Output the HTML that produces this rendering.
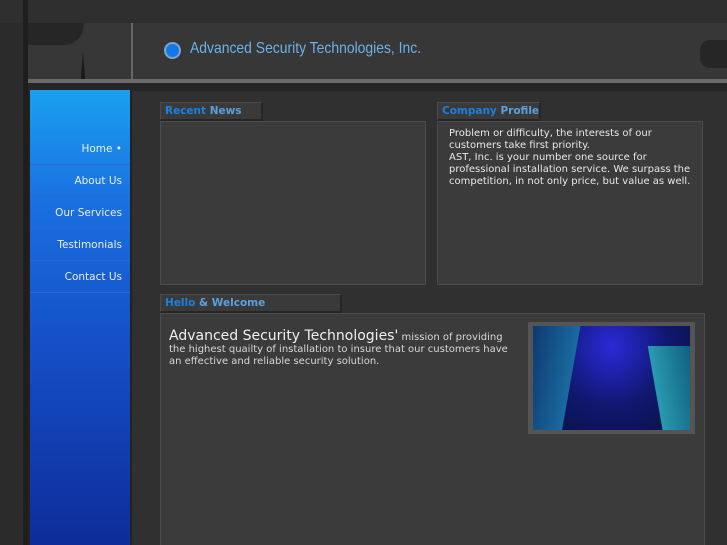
<!DOCTYPE html>
<html><head><style>
*{margin:0;padding:0;box-sizing:border-box}
html,body{width:727px;height:545px;overflow:hidden}
body{background:#2b2b2b;font-family:"DejaVu Sans",Verdana,sans-serif;position:relative}
.a{position:absolute}
.tab{position:absolute;background:#3a3a3a;border:1px solid #4a4a4a;border-bottom:2px solid #262626;border-right:2px solid #262626;font-size:10.5px;font-weight:bold;color:#5aa0e0;padding:2px 4px;white-space:nowrap;line-height:13px}
.tab b{color:#1c7fe0}
.box{position:absolute;background:#3b3b3b;border:1px solid #4c4c4c}
.nav{position:absolute;left:30px;width:100px;text-align:right;color:#e8eef8;font-size:10.5px;border-bottom:1px solid #2a6ad0;height:32px;line-height:32px;padding-right:8px}
</style></head><body>
<div class="a" style="left:0;top:0;width:727px;height:23px;background:#2f2f2f"></div>
<div class="a" style="left:23px;top:0;width:5px;height:545px;background:#1e1e1e"></div>
<div class="a" style="left:28px;top:23px;width:699px;height:68px;background:#373737"></div>
<div class="a" style="left:28px;top:23px;width:56px;height:22px;background:#262626;border-radius:0 0 20px 0"></div>
<div class="a" style="left:80px;top:52px;width:6px;height:36px;background:#1a1a1a;clip-path:polygon(50% 0,100% 100%,0 100%)"></div>
<div class="a" style="left:700px;top:40px;width:27px;height:28px;background:#262626;border-radius:10px 0 0 10px"></div>
<div class="a" style="left:131px;top:23px;width:2px;height:68px;background:#666"></div>
<div class="a" style="left:28px;top:79px;width:699px;height:4px;background:#6a6a6a"></div>
<div class="a" style="left:28px;top:83px;width:699px;height:8px;background:#262626"></div>
<div class="a" style="left:164px;top:42px;width:17px;height:17px;border-radius:50%;background:#1677e8;border:2px solid #7aa6c8"></div>
<div class="a" style="left:190px;top:40px;color:#6eb0e6;font-family:'Liberation Sans',sans-serif;font-size:16px;transform:scaleX(0.87);transform-origin:left">Advanced Security Technologies, Inc.</div>
<div class="a" style="left:28px;top:91px;width:104px;height:454px;background:#222"></div>
<div class="a" style="left:30px;top:90px;width:100px;height:455px;background:linear-gradient(180deg,#1aa0f0 0%,#1a6fe0 25%,#1550c8 55%,#0e2c9a 100%)"></div>
<div class="nav" style="top:133px">Home •</div>
<div class="nav" style="top:165px">About Us</div>
<div class="nav" style="top:197px">Our Services</div>
<div class="nav" style="top:229px">Testimonials</div>
<div class="nav" style="top:261px">Contact Us</div>
<div class="a" style="left:132px;top:91px;width:595px;height:454px;background:#303030"></div>
<div class="tab" style="left:160px;top:102px;width:103px;height:19px"><b>Recent</b> News</div>
<div class="box" style="left:160px;top:121px;width:266px;height:164px"></div>
<div class="tab" style="left:437px;top:102px;width:104px;height:19px"><b>Company</b> Profile</div>
<div class="box" style="left:437px;top:121px;width:266px;height:164px;color:#e8e8e8;font-size:10px;line-height:12px;padding:6px 11px">Problem or difficulty, the interests of our customers take first priority.<br>AST, Inc. is your number one source for professional installation service. We surpass the competition, in not only price, but value as well.</div>
<div class="tab" style="left:160px;top:294px;width:182px;height:19px"><b>Hello</b> &amp; Welcome</div>
<div class="box" style="left:160px;top:313px;width:545px;height:240px"></div>
<div class="a" style="left:169px;top:330px;width:340px;color:#d8d8d8;font-size:10px;line-height:12px"><span style="font-size:14px;color:#f0f0f0;font-weight:500">Advanced Security Technologies'</span> mission of providing the highest quailty of installation to insure that our customers have an effective and reliable security solution.</div>
<div class="a" style="left:528px;top:322px;width:167px;height:112px;background:#555;padding:4px 5px">
<div style="width:100%;height:100%;background:radial-gradient(ellipse at 50% 20%,#2a2ad8,#101870 50%,#0a1040);position:relative;overflow:hidden">
<div style="position:absolute;left:0;top:0;width:60px;height:104px;background:linear-gradient(100deg,#0d3a70,#1a6aa0 60%,transparent 61%)"></div>
<div style="position:absolute;right:0;top:20px;width:55px;height:84px;background:linear-gradient(260deg,#106080,#2a9ab0 60%,transparent 61%)"></div>
</div></div>
</body></html>
